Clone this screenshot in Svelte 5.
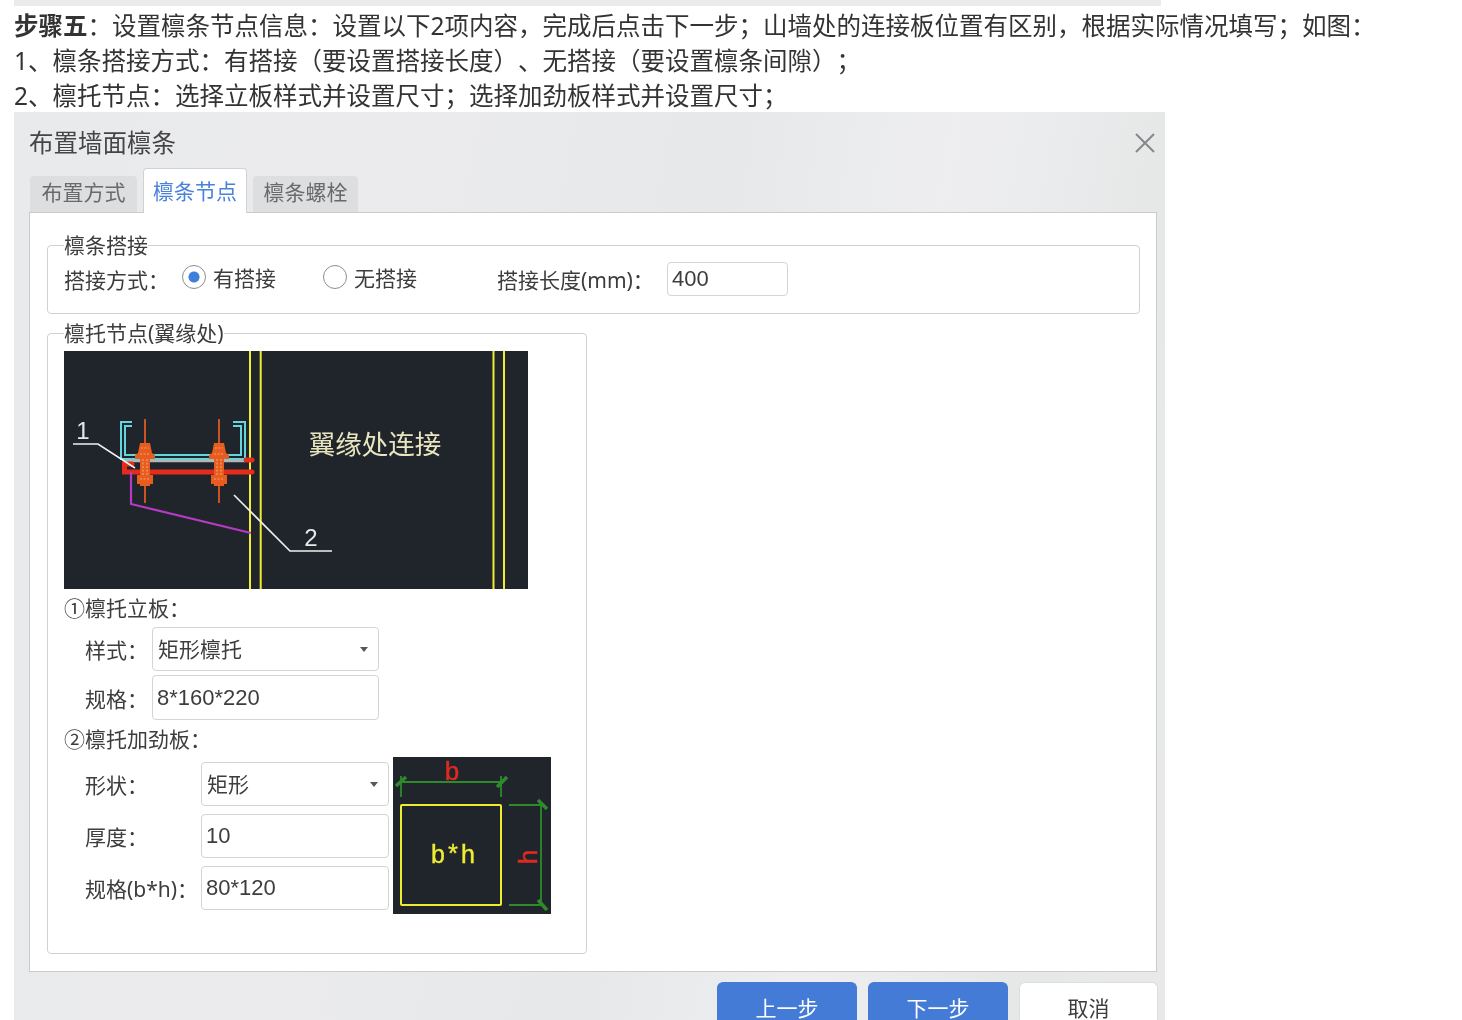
<script lang="ts">
	const tabs = ['布置方式', '檩条节点', '檩条螺栓'];
	const bolts = [81, 155];
</script>

<div class="page">
	<div class="topbar"></div>
	<div class="article">
		<p><b>步骤五</b>：设置檩条节点信息：设置以下2项内容，完成后点击下一步；山墙处的连接板位置有区别，根据实际情况填写；如图：</p>
		<p>1、檩条搭接方式：有搭接（要设置搭接长度）、无搭接（要设置檩条间隙）；</p>
		<p>2、檩托节点：选择立板样式并设置尺寸；选择加劲板样式并设置尺寸；</p>
	</div>

	<section class="dialog">
		<header class="head">
			<span class="title">布置墙面檩条</span>
			<svg class="close" width="22" height="22" viewBox="0 0 22 22">
				<path d="M2 2 L20 20 M20 2 L2 20" />
			</svg>
		</header>

		<nav class="tabs">
			{#each tabs as tab, i}
				<div class="tab" class:active={i === 1}>{tab}</div>
			{/each}
		</nav>

		<div class="panel">
			<fieldset class="lap">
				<legend>檩条搭接</legend>
				<div class="lap-row">
					<span class="lap-label">搭接方式：</span>
					<span class="radio checked"></span>
					<span class="radio-text">有搭接</span>
					<span class="radio second"></span>
					<span class="radio-text">无搭接</span>
					<span class="len-label">搭接长度(mm)：</span>
					<input class="field len" value="400" readonly />
				</div>
			</fieldset>

			<fieldset class="node">
				<legend>檩托节点(翼缘处)</legend>

				<svg class="cad" width="464" height="238" viewBox="0 0 464 238">
					<g class="yellow">
						<path d="M186 0 V238 M196.7 0 V238 M429.5 0 V238 M440 0 V238" />
					</g>
					<g class="cyan">
						<path d="M68 71 H57 V108 H181 V71 H169" />
						<path d="M68 75 H61 V104 H177 V75 H169" />
					</g>
					<path class="grey" d="M60 110 H181" />
					<g class="red">
						<path d="M182 109 H188" />
						<path d="M68 113 H60.5 V121 H188" />
					</g>
					<path class="magenta" d="M67 121 V153 L187 182" />
					{#each bolts as x}
						<g class="bolt">
							<path d="M{x} 68 V152" />
							<polygon points="{x - 5},92 {x + 5},92 {x + 7},102 {x + 10},104 {x + 10},108 {x - 10},108 {x - 10},104 {x - 7},102" />
							<rect x={x - 5} y="108" width="10" height="16" />
							<rect x={x - 8} y="124" width="16" height="9" />
							<rect x={x - 5} y="133" width="10" height="2" />
							<path class="dots" d="M{x - 4} 97 H{x + 4} M{x - 5} 103 H{x + 5} M{x - 5} 128 H{x + 5}" />
							<path class="dots" d="M{x - 2} 108 V124 M{x + 2} 108 V124" />
						</g>
					{/each}
					<g class="leader">
						<path d="M9 93 H34 L71 117" />
						<path d="M170 144 L226 200 H268" />
					</g>
					<text class="num" x="19" y="88" text-anchor="middle">1</text>
					<text class="num" x="247" y="195" text-anchor="middle">2</text>
					<text class="cad-title" x="311" y="103" text-anchor="middle">翼缘处连接</text>
				</svg>

				<div class="sub">①檩托立板：</div>
				<div class="form form-a">
					<span>样式：</span>
					<div class="field select">矩形檩托</div>
					<span>规格：</span>
					<input class="field" value="8*160*220" readonly />
				</div>

				<div class="sub">②檩托加劲板：</div>
				<div class="stiff">
					<div class="form form-b">
						<span>形状：</span>
						<div class="field select">矩形</div>
						<span>厚度：</span>
						<input class="field" value="10" readonly />
						<span>规格(b*h)：</span>
						<input class="field" value="80*120" readonly />
					</div>

					<svg class="cad small" width="158" height="157" viewBox="0 0 158 157">
						<rect class="yellow-box" x="8" y="48" width="100" height="100" rx="1" />
						<text class="bh" x="60" y="106" text-anchor="middle">b*h</text>
						<g class="green">
							<path d="M7 25 H107 M8 19 V40 M108 19 V40" />
							<path d="M116 48 H150 M116 148 H150 M148 48 V148" />
						</g>
						<g class="green thick">
							<path d="M3 29 L13 20 M104 30 L114 20 M145 43 L154 52 M145 143 L154 153" />
						</g>
						<text class="dim" x="59" y="23" text-anchor="middle">b</text>
						<text class="dim" x="0" y="0" text-anchor="middle" transform="translate(144 100) rotate(-90)">h</text>
					</svg>
				</div>
			</fieldset>
		</div>

		<footer class="actions">
			<button class="btn primary">上一步</button>
			<button class="btn primary">下一步</button>
			<button class="btn">取消</button>
		</footer>
	</section>
</div>

<style>
	:global(body) {
		background: #fff;
	}

	.page {
		width: 1462px;
		height: 1020px;
		overflow: hidden;
		background: #fff;
		color: #3d3d3d;
		font-family: 'Noto Sans', 'Noto Sans CJK SC', sans-serif;
		font-size: 21px;
		filter: blur(0.45px);
	}

	.topbar {
		width: 1147px;
		height: 6px;
		margin-left: 14px;
		background: #e9ebec;
	}

	.article {
		margin: 2px 0 0 14px;
		font-size: 24.5px;
		line-height: 35px;
		color: #333;
		white-space: nowrap;
		text-spacing-trim: space-all;
	}

	.article p {
		margin: 0;
	}

	.dialog {
		width: 1151px;
		height: 908px;
		margin: -1px 0 0 14px;
		background: linear-gradient(
			100deg,
			#e9eaeb 0%,
			#ebebed 30%,
			#e6e8e9 55%,
			#eeeef0 72%,
			#e6e8e8 88%,
			#e9e9ea 100%
		);
	}

	.head {
		display: flex;
		align-items: center;
		justify-content: space-between;
		box-sizing: border-box;
		height: 56px;
		padding: 17px 9px 11px 15px;
	}

	.title {
		font-size: 24.5px;
		line-height: 28px;
		color: #454545;
	}

	.close path {
		fill: none;
		stroke: #85888b;
		stroke-width: 2;
	}

	.tabs {
		display: flex;
		align-items: flex-end;
		gap: 6px;
		height: 44px;
		margin-left: 16px;
		position: relative;
		z-index: 1;
	}

	.tab {
		box-sizing: border-box;
		width: 107px;
		height: 36px;
		line-height: 32px;
		text-align: center;
		background: #dddedf;
		color: #6a6a6a;
		border-radius: 4px 4px 0 0;
	}

	.tab:nth-child(2) {
		width: 104px;
	}

	.tab:nth-child(3) {
		width: 105px;
	}

	.tab.active {
		height: 45px;
		margin-bottom: -1px;
		line-height: 44px;
		background: #fff;
		color: #4a82d9;
		border: 1px solid #cfd1d2;
		border-bottom: none;
	}

	.panel {
		box-sizing: border-box;
		width: 1128px;
		height: 760px;
		margin-left: 15px;
		padding: 19px 16px 0 17px;
		background: #fff;
		border: 1px solid #c9cbcc;
	}

	fieldset {
		box-sizing: border-box;
		margin: 0;
		padding: 0 16px;
		border: 1px solid #cfd1d3;
		border-radius: 4px;
	}

	legend {
		padding: 0;
		line-height: 26px;
	}

	.lap {
		height: 82px;
	}

	.lap-row {
		display: flex;
		align-items: center;
		height: 34px;
		margin-top: 4px;
	}

	.lap-label {
		width: 118px;
	}

	.radio {
		box-sizing: border-box;
		width: 24px;
		height: 24px;
		margin-top: -5px;
		border: 1.5px solid #8b8d90;
		border-radius: 50%;
		background: #fff;
	}

	.radio.checked {
		background: radial-gradient(circle, #3f7fdc 0 5px, #fff 6px);
	}

	.radio.second {
		margin-left: 47px;
	}

	.radio-text {
		margin: -4px 0 0 7px;
	}

	.len-label {
		width: 170px;
		margin-left: 80px;
		white-space: nowrap;
	}

	.field {
		box-sizing: border-box;
		display: block;
		width: 100%;
		height: 44px;
		margin: 0;
		padding: 0 5px;
		font: inherit;
		line-height: 42px;
		color: #3d3d3d;
		background: #fff;
		border: 1px solid #d2d4d6;
		border-radius: 4px;
		outline: none;
	}

	input.field {
		padding-left: 4px;
		font-family: 'Liberation Sans', sans-serif;
		font-size: 22px;
	}

	.field.len {
		width: 121px;
		height: 34px;
		line-height: 32px;
	}

	.select {
		position: relative;
	}

	.select::after {
		content: '';
		position: absolute;
		right: 10px;
		top: 19px;
		border: 4px solid transparent;
		border-top: 5px solid #55585c;
		border-bottom: none;
	}

	.node {
		width: 540px;
		height: 634px;
		margin-top: 6px;
	}

	.cad {
		display: block;
		background: #20252c;
		font-family: 'Liberation Sans', sans-serif;
		flex: none;
	}

	.node > .cad {
		margin-top: 5px;
	}

	.cad path,
	.cad polygon {
		fill: none;
	}

	.yellow path {
		stroke: #f0ec30;
		stroke-width: 2;
	}

	.cyan path {
		stroke: #62d6da;
		stroke-width: 2;
	}

	.grey {
		stroke: #b5b5b5;
		stroke-width: 2.5;
	}

	.red path {
		stroke: #e42b1c;
		stroke-width: 5;
		stroke-linecap: round;
	}

	.magenta {
		stroke: #b53bc4;
		stroke-width: 2.2;
	}

	.bolt path {
		stroke: #df5a22;
		stroke-width: 1.8;
	}

	.cad .bolt polygon,
	.bolt rect {
		fill: #e85c1f;
	}

	.bolt .dots {
		stroke: #f0a070;
		stroke-width: 1.2;
		stroke-dasharray: 2 1.5;
	}

	.leader path {
		stroke: #f0f0f0;
		stroke-width: 1.6;
	}

	.num {
		fill: #e8e8e8;
		font-size: 24px;
	}

	.cad-title {
		fill: #e8e5bf;
		font-family: 'Noto Sans CJK SC', sans-serif;
		font-size: 26.5px;
	}

	.sub {
		height: 28px;
		margin-top: 5px;
		line-height: 28px;
	}

	.form {
		display: grid;
		align-items: center;
		margin-left: 21px;
	}

	.form-a {
		grid-template-columns: 67px 227px;
		row-gap: 4px;
		margin-top: 5px;
	}

	.form-a input {
		height: 45px;
	}

	.form-b {
		grid-template-columns: 116px 188px;
		row-gap: 8px;
		margin-top: 5px;
		align-self: flex-start;
	}

	.form span {
		white-space: nowrap;
	}

	.stiff {
		display: flex;
		gap: 4px;
		margin-top: 4px;
	}

	.yellow-box {
		fill: none;
		stroke: #f0ec30;
		stroke-width: 2;
	}

	.bh {
		fill: #f0ec30;
		stroke: #f0ec30;
		stroke-width: 0.4;
		font-family: 'Liberation Mono', monospace;
		font-size: 25px;
	}

	.green path {
		stroke: #2f8a2c;
		stroke-width: 1.8;
	}

	.green.thick path {
		stroke-width: 3.5;
	}

	.dim {
		fill: #e02a20;
		stroke: #e02a20;
		stroke-width: 0.5;
		font-family: 'Liberation Mono', monospace;
		font-size: 26px;
	}

	.actions {
		display: flex;
		justify-content: flex-end;
		gap: 11px;
		width: 1144px;
		margin-top: 10px;
	}

	.btn {
		box-sizing: border-box;
		width: 140px;
		height: 38px;
		padding: 12px 0 0;
		font: inherit;
		line-height: 22px;
		color: #3d3d3d;
		background: #fff;
		border: 1px solid #dcdddf;
		border-bottom: none;
		border-radius: 6px 6px 0 0;
	}

	.btn:last-child {
		width: 139px;
	}

	.btn.primary {
		color: #fff;
		background: #437bd6;
		border-color: #437bd6;
	}
</style>
